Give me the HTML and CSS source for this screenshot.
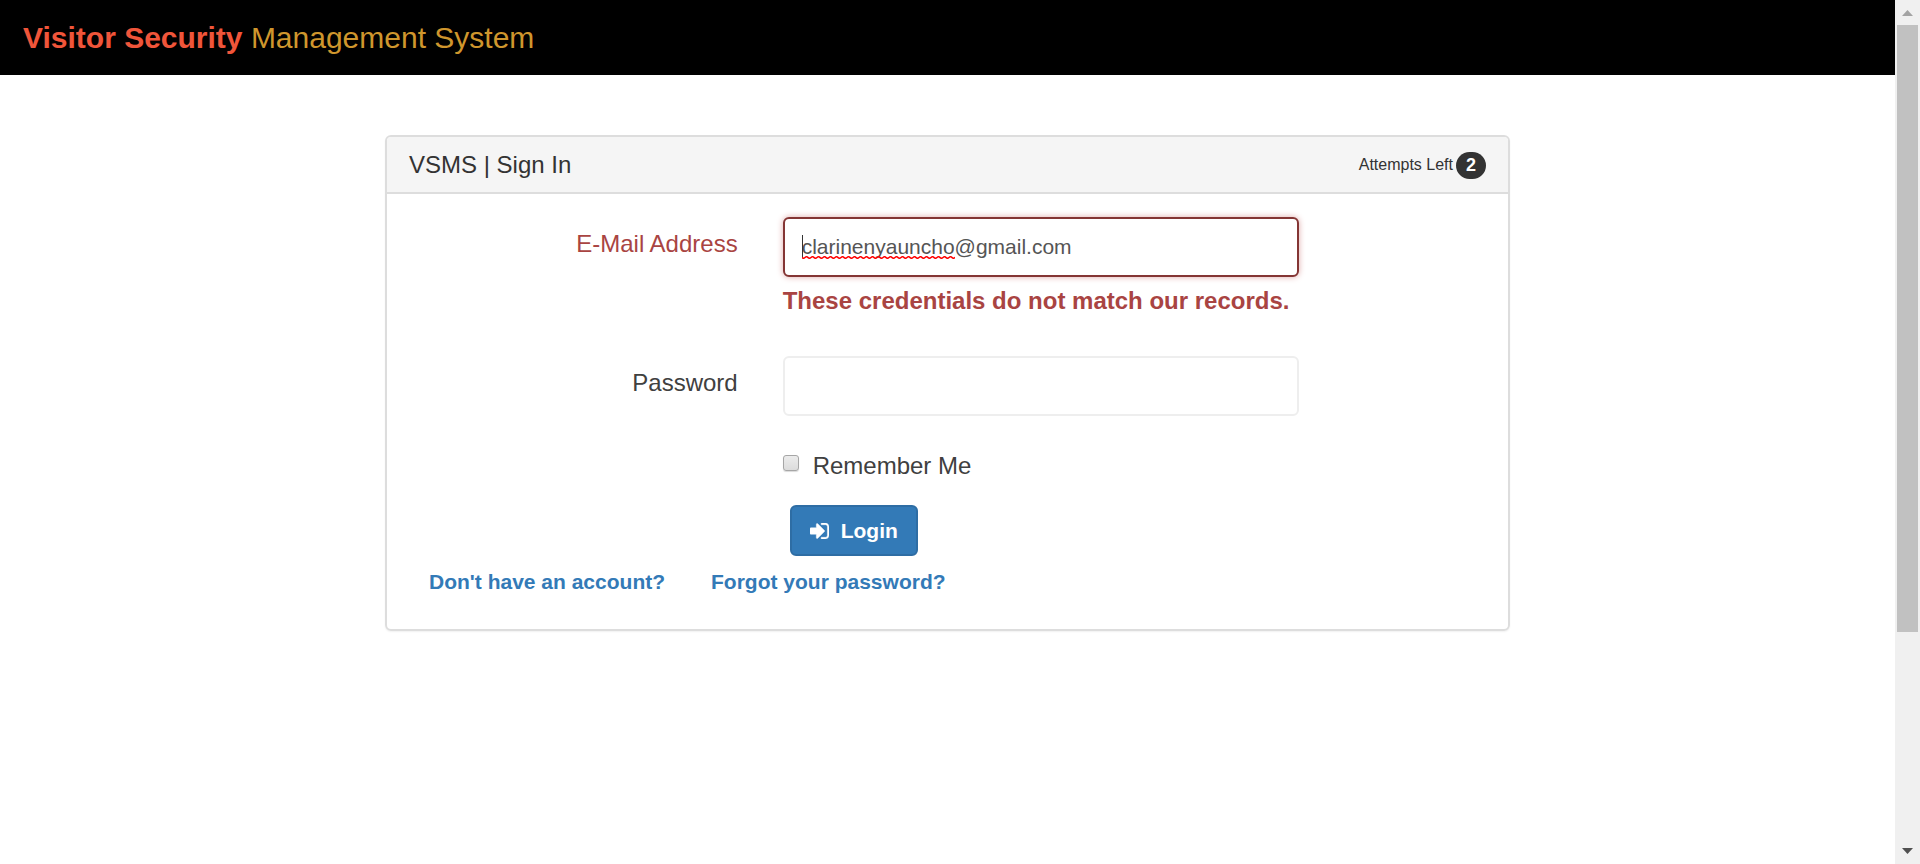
FILE: index.html
```html
<!DOCTYPE html>
<html lang="en">
<head>
<meta charset="utf-8">
<title>VSMS | Sign In</title>
<link rel="stylesheet" href="styles.css">
</head>
<body>
<div class="page">
  <header class="navbar">
    <a class="brand" href="#"><strong class="brand-strong">Visitor Security</strong> Management System</a>
  </header>
  <main class="main">
    <section class="panel">
      <div class="panel-heading">
        <h1 class="panel-title">VSMS | Sign In</h1>
        <div class="attempts">Attempts Left <span class="badge">2</span></div>
      </div>
      <form class="panel-body">
        <div class="row">
          <label class="label label-error" for="email">E-Mail Address</label>
          <div class="field">
            <div class="control">
              <input class="input input-error" id="email" type="text" value="clarinenyauncho@gmail.com">
              <span class="caret"></span>
              <svg class="squiggle" width="153" height="3" aria-hidden="true">
                <defs>
                  <pattern id="wave" width="6" height="3" patternUnits="userSpaceOnUse">
                    <path d="M-1.5 .5 L1.5 2.5 L4.5 .5 L7.5 2.5" fill="none" stroke="#f00" stroke-width="1.5"/>
                  </pattern>
                </defs>
                <rect width="153" height="3" fill="url(#wave)"/>
              </svg>
            </div>
            <strong class="help">These credentials do not match our records.</strong>
          </div>
        </div>
        <div class="row row-password">
          <label class="label" for="password">Password</label>
          <div class="field">
            <input class="input" id="password" type="password">
          </div>
        </div>
        <div class="row row-remember">
          <div class="field field-offset">
            <label class="remember"><input class="check" type="checkbox"> Remember Me</label>
          </div>
        </div>
        <div class="row row-login">
          <div class="field field-offset">
            <button class="login" type="button">
              <svg class="login-icon" viewBox="0 256 1536 1280" aria-hidden="true"><path fill="currentColor" stroke="currentColor" stroke-width="40" d="M1184 896q0 26-19 45l-544 544q-19 19-45 19t-45-19-19-45v-288h-448q-26 0-45-19t-19-45v-384q0-26 19-45t45-19h448v-288q0-26 19-45t45-19 45 19l544 544q19 19 19 45zm352-352v704q0 119-84.500 203.500t-203.500 84.500h-320q-13 0-22.500-9.500t-9.500-22.500q0-4-1-20t-.5-26.500 3-23.500 10-19.500 20.500-6.500h320q66 0 113-47t47-113v-704q0-66-47-113t-113-47h-312l-11.500-1-11.500-3-8-5.500-7-9-2-13.500q0-4-1-20t-.5-26.500 3-23.500 10-19.500 20.500-6.500h320q119 0 203.500 84.500t84.500 203.500z"/></svg>
              Login
            </button>
          </div>
        </div>
        <nav class="links">
          <a class="link" href="#">Don't have an account?</a>
          <a class="link" href="#">Forgot your password?</a>
        </nav>
      </form>
    </section>
  </main>
</div>
<div class="scrollbar" aria-hidden="true">
  <svg class="arrow" width="11" height="6" viewBox="0 0 11 6"><path fill="#a3a3a3" d="M0 6 L5.500 0 L11 6z"/></svg>
  <div class="track"><div class="thumb"></div></div>
  <svg class="arrow" width="11" height="6" viewBox="0 0 11 6"><path fill="#505050" d="M0 0 L11 0 L5.500 6z"/></svg>
</div>
</body>
</html>
```
FILE: styles.css
```css
* {
  box-sizing: border-box;
}

body {
  display: flex;
  min-height: 100vh;
  margin: 0;
  background: #fff;
  color: #333;
  font-family: "Liberation Sans", Arial, sans-serif;
  font-size: 24px;
  line-height: 34px;
}

.page {
  flex: 1;
}

.navbar {
  display: flex;
  align-items: center;
  height: 75px;
  padding: 0 23px;
  background: #000;
}

.brand {
  color: #cf962d;
  font-size: 30px;
  text-decoration: none;
}

.brand-strong {
  color: #f0553a;
}

.main {
  padding: 60px 22px;
}

.panel {
  max-width: 1125px;
  margin: 0 auto;
  border: 2px solid #ddd;
  border-radius: 6px;
  box-shadow: 0 1px 2px rgba(0, 0, 0, 0.06);
}

.panel-heading {
  display: flex;
  align-items: center;
  justify-content: space-between;
  padding: 11px 22px 10px;
  border-bottom: 2px solid #ddd;
  border-radius: 4px 4px 0 0;
  background: #f5f5f5;
}

.panel-title {
  margin: 0;
  font-size: 24px;
  font-weight: 400;
}

.attempts {
  display: flex;
  align-items: center;
  gap: 3px;
  font-size: 16px;
}

.badge {
  padding: 0 10px;
  border-radius: 14px;
  background: #333;
  color: #fff;
  font-size: 18px;
  font-weight: 700;
  line-height: 27px;
}

.panel-body {
  padding: 23px 0 32px;
  color: #404040;
}

.row {
  display: grid;
  grid-template-columns: 4fr 6fr 2fr;
}

.row-password {
  margin-top: 38px;
}

.row-remember {
  margin-top: 33px;
}

.row-login {
  margin-top: 22px;
}

.label {
  padding: 10px 23px 0;
  text-align: right;
}

.label-error,
.help {
  color: #a94442;
}

.field {
  padding: 0 22px;
}

.field-offset {
  grid-column: 2;
}

.control {
  position: relative;
}

.input {
  display: block;
  width: 100%;
  height: 60px;
  padding: 0 17px;
  border: 2px solid #eee;
  border-radius: 6px;
  outline: 0;
  background: #fff;
  color: #555;
  font-family: inherit;
  font-size: 21px;
}

.input-error {
  border-color: #843534;
  box-shadow: 0 0 6px #dfa9a8;
}

.caret {
  position: absolute;
  top: 18px;
  left: 19px;
  width: 1px;
  height: 23px;
  background: #333;
}

.squiggle {
  position: absolute;
  top: 39px;
  left: 19px;
}

.help {
  display: block;
  margin-top: 7px;
}

.remember {
  display: flex;
  gap: 14px;
}

.check {
  width: 16px;
  height: 16px;
  margin: 6px 0 0;
  appearance: none;
  border: 1px solid #a6a6a6;
  border-radius: 3px;
  background: linear-gradient(#ececec, #dcdcdc);
  box-shadow: 0 1px 1px rgba(0, 0, 0, 0.15);
}

.login {
  display: flex;
  align-items: center;
  gap: 12px;
  height: 51px;
  margin-left: 7px;
  padding: 0 18px;
  border: 2px solid #2e6da4;
  border-radius: 6px;
  background: #337ab7;
  color: #fff;
  font-family: inherit;
  font-size: 21px;
  font-weight: 700;
}

.login-icon {
  width: 19px;
  height: 16px;
}

.links {
  display: flex;
  gap: 46px;
  margin-top: 11px;
  padding: 0 42px;
  font-size: 21px;
  font-weight: 700;
  line-height: 30px;
}

.link {
  color: #337ab7;
  text-decoration: none;
}

.scrollbar {
  display: flex;
  flex-direction: column;
  align-items: center;
  gap: 9px;
  width: 25px;
  padding: 10px 0;
  background: #f0f0f0;
}

.track {
  flex: 1;
  width: 21px;
}

.thumb {
  height: calc(75% - 4px);
  background: #c1c1c1;
}
```
